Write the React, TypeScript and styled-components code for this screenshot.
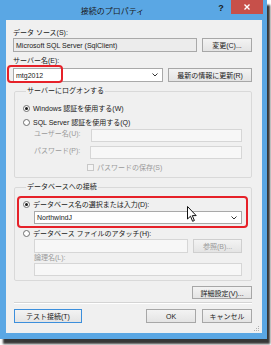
import React from "react";
import styled, { createGlobalStyle } from "styled-components";

const Global = createGlobalStyle`
  html, body { margin: 0; padding: 0; background: #ffffff; }
  body { width: 271px; height: 345px; overflow: hidden; }
  * { box-sizing: border-box; }
`;

const FONT = `"Liberation Sans", "Noto Sans CJK JP", sans-serif`;

const Stage = styled.div`
  width: 271px;
  height: 345px;
  background: #ffffff;
`;

const Window = styled.div`
  width: 267px;
  height: 339px;
  background: #5aa7e4;
  box-shadow: 3px 5px 2px rgba(20, 20, 20, 0.85);
  display: flex;
  flex-direction: column;
  padding: 0 5px 6px 6px;
  font-family: ${FONT};
  font-size: 7px;
  color: #111;
  overflow: hidden;
`;

const TitleBar = styled.div`
  height: 20px;
  flex: none;
  display: flex;
  align-items: flex-start;
`;

const Title = styled.div`
  flex: 1;
  text-align: center;
  font-family: "Noto Sans CJK JP", sans-serif;
  font-size: 8px;
  line-height: 10px;
  padding-top: 6px;
  padding-left: 8px;
  color: #1a1a1a;
`;

const HelpButton = styled.div`
  width: 20px;
  height: 14px;
  font-family: "Liberation Sans", sans-serif;
  font-weight: bold;
  font-size: 9px;
  line-height: 14px;
  text-align: center;
  color: #1a1a1a;
  margin-top: 1px;
`;

const CloseButton = styled.div`
  width: 32px;
  height: 14px;
  margin-right: -1px;
  background: #c7504a;
  display: flex;
  align-items: center;
  justify-content: center;
`;

const Panel = styled.div`
  flex: 1;
  min-height: 0;
  background: #f0f0f0;
  display: flex;
  flex-direction: column;
  padding: 0 10px 0 7px;
  position: relative;
`;

const Label = styled.div<{ $mt?: number; $disabled?: boolean; $indent?: number }>`
  height: 10px;
  flex: none;
  line-height: 10px;
  margin-top: ${(p) => p.$mt ?? 0}px;
  margin-left: ${(p) => p.$indent ?? 0}px;
  color: ${(p) => (p.$disabled ? "#9a9a9a" : "#1a1a1a")};
  white-space: nowrap;
`;

const Row = styled.div<{ $mt?: number; $h?: number; $indent?: number }>`
  display: flex;
  flex: none;
  align-items: stretch;
  gap: 5px;
  height: ${(p) => p.$h ?? 14}px;
  margin-top: ${(p) => p.$mt ?? 0}px;
  margin-left: ${(p) => p.$indent ?? 0}px;
  position: relative;
`;

const TextBox = styled.div<{ $w?: number; $variant?: "readonly" | "disabled" | "normal" }>`
  ${(p) => (p.$w ? `width: ${p.$w}px;` : "flex: 1;")}
  border: 1px solid ${(p) => (p.$variant === "disabled" ? "#d6d6d6" : "#a9a9a9")};
  background: ${(p) =>
    p.$variant === "readonly" ? "#ececec" : p.$variant === "disabled" ? "#f7f7f7" : "#ffffff"};
  display: flex;
  align-items: center;
  padding-left: 2px;
  white-space: nowrap;
  color: #1a1a1a;
`;

const ComboText = styled.span`
  flex: 1;
`;

const Arrow = styled.svg`
  width: 6px;
  height: 4px;
  margin-right: 4px;
`;

const Button = styled.div<{ $w: number; $focus?: boolean; $disabled?: boolean }>`
  width: ${(p) => p.$w}px;
  border: 1px solid ${(p) => (p.$focus ? "#3c8fdc" : p.$disabled ? "#cfcfcf" : "#a7a7a7")};
  background: linear-gradient(#f3f3f3, #e4e4e4);
  display: flex;
  align-items: center;
  justify-content: center;
  white-space: nowrap;
  color: ${(p) => (p.$disabled ? "#9a9a9a" : "#1a1a1a")};
`;

const Group = styled.fieldset<{ $mt: number; $pb: number }>`
  margin: ${(p) => p.$mt}px 0 0 1px;
  padding: 0 9px ${(p) => p.$pb}px 8px;
  border: 1px solid #d9d9d9;
  border-radius: 2px;
  display: flex;
  flex-direction: column;
  flex: none;
  min-width: 0;
  position: relative;
`;

const Legend = styled.legend`
  padding: 0 1px;
  margin-left: 3px;
  line-height: 10px;
  height: 10px;
  font-size: 7px;
  color: #1a1a1a;
`;

const OptionRow = styled.div<{ $mt: number; $disabled?: boolean }>`
  display: flex;
  flex: none;
  align-items: center;
  gap: 3px;
  height: 10px;
  margin-top: ${(p) => p.$mt}px;
  color: ${(p) => (p.$disabled ? "#9a9a9a" : "#1a1a1a")};
  white-space: nowrap;
`;

const RadioCircle = styled.span<{ $checked?: boolean }>`
  width: 7px;
  height: 7px;
  border-radius: 50%;
  border: 1px solid #6f6f6f;
  background: #ffffff;
  display: flex;
  align-items: center;
  justify-content: center;
  &::after {
    content: "";
    width: 3px;
    height: 3px;
    border-radius: 50%;
    background: ${(p) => (p.$checked ? "#1a1a1a" : "transparent")};
  }
`;

const CheckBox = styled.span`
  width: 7px;
  height: 7px;
  border: 1px solid #c8c8c8;
  background: #f4f4f4;
`;

const CheckLabel = styled.span`
  width: 145px;
`;

const Separator = styled.div`
  height: 2px;
  flex: none;
  margin: 3px 0 0 1px;
  background: #d4d4d4;
  border-bottom: 1px solid #ffffff;
`;

const Footer = styled.div`
  display: flex;
  flex: none;
  height: 14px;
  margin-top: 5px;
  margin-left: 1px;
  gap: 6px;
`;

const Spacer = styled.div`
  flex: 1;
`;

const RightRow = styled.div<{ $mt: number }>`
  display: flex;
  flex: none;
  justify-content: flex-end;
  height: 13px;
  margin-top: ${(p) => p.$mt}px;
`;

const Highlight = styled.div<{ $l: number; $t: number; $w: number; $h: number }>`
  position: absolute;
  left: ${(p) => p.$l}px;
  top: ${(p) => p.$t}px;
  width: ${(p) => p.$w}px;
  height: ${(p) => p.$h}px;
  border: 2px solid #e62129;
  border-radius: 4px;
  pointer-events: none;
`;

const Cursor = styled.svg`
  position: absolute;
  left: 172px;
  top: 14px;
  width: 10px;
  height: 17px;
`;

const Grip = styled.svg`
  position: absolute;
  right: 2px;
  bottom: 1px;
  width: 7px;
  height: 7px;
`;

export default function App() {
  return (
    <Stage>
      <Global />
      <Window>
        <TitleBar>
          <Title>接続のプロパティ</Title>
          <HelpButton>?</HelpButton>
          <CloseButton>
            <svg width="6" height="6" viewBox="0 0 6 6">
              <path d="M0.5 0.5 L5.5 5.5 M5.5 0.5 L0.5 5.5" stroke="#fff" strokeWidth="1.4" />
            </svg>
          </CloseButton>
        </TitleBar>
        <Panel>
          <Label $mt={8}>データ ソース(S):</Label>
          <Row>
            <TextBox $w={184} $variant="readonly">Microsoft SQL Server (SqlClient)</TextBox>
            <Button $w={50}>変更(C)...</Button>
          </Row>
          <Label $mt={4}>サーバー名(E):</Label>
          <Row $mt={2}>
            <TextBox $w={150}>
              <ComboText>mtg2012</ComboText>
              <Arrow viewBox="0 0 6 4">
                <path d="M0.5 0.5 L3 3 L5.5 0.5" fill="none" stroke="#333" strokeWidth="1" />
              </Arrow>
            </TextBox>
            <Button $w={84}>最新の情報に更新(R)</Button>
            <Highlight $l={-6} $t={-3} $w={56} $h={18} />
          </Row>

          <Group $mt={4} $pb={5}>
            <Legend>サーバーにログオンする</Legend>
            <OptionRow $mt={7}>
              <RadioCircle $checked />
              <span>Windows 認証を使用する(W)</span>
            </OptionRow>
            <OptionRow $mt={4}>
              <RadioCircle />
              <span>SQL Server 認証を使用する(Q)</span>
            </OptionRow>
            <Row $mt={2} $h={13} $indent={11}>
              <Label $disabled>ユーザー名(U):</Label>
              <Spacer />
              <TextBox $w={154} $variant="disabled" />
            </Row>
            <Row $mt={4} $h={13} $indent={11}>
              <Label $disabled>パスワード(P):</Label>
              <Spacer />
              <TextBox $w={154} $variant="disabled" />
            </Row>
            <OptionRow $mt={3} $disabled>
              <Spacer />
              <CheckBox />
              <CheckLabel>パスワードの保存(S)</CheckLabel>
            </OptionRow>
          </Group>

          <Group $mt={4} $pb={4}>
            <Legend>データベースへの接続</Legend>
            <OptionRow $mt={7}>
              <RadioCircle $checked />
              <span>データベース名の選択または入力(D):</span>
            </OptionRow>
            <Row $mt={2} $h={13} $indent={11}>
              <TextBox>
                <ComboText>NorthwindJ</ComboText>
                <Arrow viewBox="0 0 6 4">
                  <path d="M0.5 0.5 L3 3 L5.5 0.5" fill="none" stroke="#333" strokeWidth="1" />
                </Arrow>
              </TextBox>
            </Row>
            <OptionRow $mt={4}>
              <RadioCircle />
              <span>データベース ファイルのアタッチ(H):</span>
            </OptionRow>
            <Row $mt={1} $h={14} $indent={11}>
              <TextBox $variant="disabled" />
              <Button $w={49} $disabled>参照(B)...</Button>
            </Row>
            <Label $indent={11} $disabled>論理名(L):</Label>
            <Row $h={13} $indent={11}>
              <TextBox $variant="disabled" />
            </Row>
            <Highlight $l={2} $t={4} $w={231} $h={32} />
            <Cursor viewBox="0 0 10 17">
              <path
                d="M0.5 0.5 L0.5 13 L3.5 10.2 L5.6 15.3 L7.4 14.5 L5.3 9.6 L9.2 9.6 Z"
                fill="#ffffff"
                stroke="#111"
                strokeWidth="1"
                strokeLinejoin="round"
              />
            </Cursor>
          </Group>

          <RightRow $mt={5}>
            <Button $w={60}>詳細設定(V)...</Button>
          </RightRow>
          <Separator />
          <Footer>
            <Button $w={68} $focus>テスト接続(T)</Button>
            <Spacer />
            <Button $w={50}>OK</Button>
            <Button $w={50}>キャンセル</Button>
          </Footer>
          <Grip viewBox="0 0 7 7">
            <rect x="5" y="1" width="1" height="1" fill="#b0b0b0" />
            <rect x="3" y="3" width="1" height="1" fill="#b0b0b0" />
            <rect x="5" y="3" width="1" height="1" fill="#b0b0b0" />
            <rect x="1" y="5" width="1" height="1" fill="#b0b0b0" />
            <rect x="3" y="5" width="1" height="1" fill="#b0b0b0" />
            <rect x="5" y="5" width="1" height="1" fill="#b0b0b0" />
          </Grip>
        </Panel>
      </Window>
    </Stage>
  );
}
